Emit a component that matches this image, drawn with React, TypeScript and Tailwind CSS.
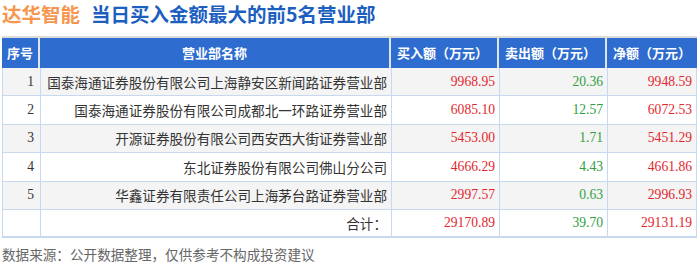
import React from "react";

const rows = [
  { i: "1", name: "国泰海通证券股份有限公司上海静安区新闻路证券营业部", buy: "9968.95", sell: "20.36", net: "9948.59" },
  { i: "2", name: "国泰海通证券股份有限公司成都北一环路证券营业部", buy: "6085.10", sell: "12.57", net: "6072.53" },
  { i: "3", name: "开源证券股份有限公司西安西大街证券营业部", buy: "5453.00", sell: "1.71", net: "5451.29" },
  { i: "4", name: "东北证券股份有限公司佛山分公司", buy: "4666.29", sell: "4.43", net: "4661.86" },
  { i: "5", name: "华鑫证券有限责任公司上海茅台路证券营业部", buy: "2997.57", sell: "0.63", net: "2996.93" },
];

const cjk = { fontFamily: '"Noto Sans CJK SC", "Noto Sans", sans-serif' };
const num = { fontFamily: '"Liberation Serif", "Noto Sans CJK SC", serif' };

export default function App() {
  return (
    <div className="relative w-[700px] h-[268px] bg-white overflow-hidden" style={cjk}>
      <div className="relative flex items-center h-[28px] pl-[2px] gap-[11px] font-bold text-[19.5px] leading-none">
        <span className="text-[#f7964f]">达华智能</span>
        <span className="text-[#1d5fbf]">当日买入金额最大的前5名营业部</span>
      </div>
      <div className="relative mt-[8px] ml-[2px] w-[695px] border-t-2 border-[#dcdcdc]">
        <div className="flex h-[30px] bg-[#2e6ccf] text-white font-bold text-[13px] items-stretch">
          <div className="w-[38px] flex items-center justify-center border-r-2 border-[#dde6f2]">序号</div>
          <div className="w-[351px] flex items-center justify-center border-r-2 border-[#dde6f2]">营业部名称</div>
          <div className="w-[108px] flex items-center pl-[6px] border-r-2 border-[#dde6f2]">买入额（万元）</div>
          <div className="w-[108px] flex items-center pl-[6px] border-r-2 border-[#dde6f2]">卖出额（万元）</div>
          <div className="flex-1 flex items-center pl-[6px]">净额（万元）</div>
        </div>
        <div className="border-l border-r border-[#c6d9ee]">
          {rows.map((r, k) => (
            <div
              key={r.i}
              className={`flex h-[28.4px] border-b border-[#c6d9ee] text-[13.6px] ${k % 2 === 0 ? "bg-[#f4f4f4]" : "bg-white"}`}
            >
              <div className="w-[38px] flex items-center justify-end pr-[6px] border-r border-[#c6d9ee] text-[#333]" style={num}>{r.i}</div>
              <div className="w-[351px] flex items-center justify-end pr-[4px] border-r border-[#c6d9ee] text-[#333]">{r.name}</div>
              <div className="w-[108px] flex items-center justify-end pr-[4px] border-r border-[#c6d9ee] text-[#e3262c]" style={num}>{r.buy}</div>
              <div className="w-[108px] flex items-center justify-end pr-[4px] border-r border-[#c6d9ee] text-[#2ea043]" style={num}>{r.sell}</div>
              <div className="flex-1 flex items-center justify-end pr-[4px] text-[#e3262c]" style={num}>{r.net}</div>
            </div>
          ))}
          <div className="flex h-[28.4px] border-b-2 border-[#c6d9ee] text-[13.6px] bg-white">
            <div className="w-[38px] border-r border-[#c6d9ee]"></div>
            <div className="w-[351px] flex items-center justify-end pr-[4px] border-r border-[#c6d9ee] text-[#333]">合计：</div>
            <div className="w-[108px] flex items-center justify-end pr-[4px] border-r border-[#c6d9ee] text-[#e3262c]" style={num}>29170.89</div>
            <div className="w-[108px] flex items-center justify-end pr-[4px] border-r border-[#c6d9ee] text-[#2ea043]" style={num}>39.70</div>
            <div className="flex-1 flex items-center justify-end pr-[4px] text-[#e3262c]" style={num}>29131.19</div>
          </div>
        </div>
      </div>
      <div className="relative mt-[6px] pl-[2px] text-[13.6px] text-[#666] leading-[20px]">
        数据来源：公开数据整理，仅供参考不构成投资建议
      </div>
    </div>
  );
}
